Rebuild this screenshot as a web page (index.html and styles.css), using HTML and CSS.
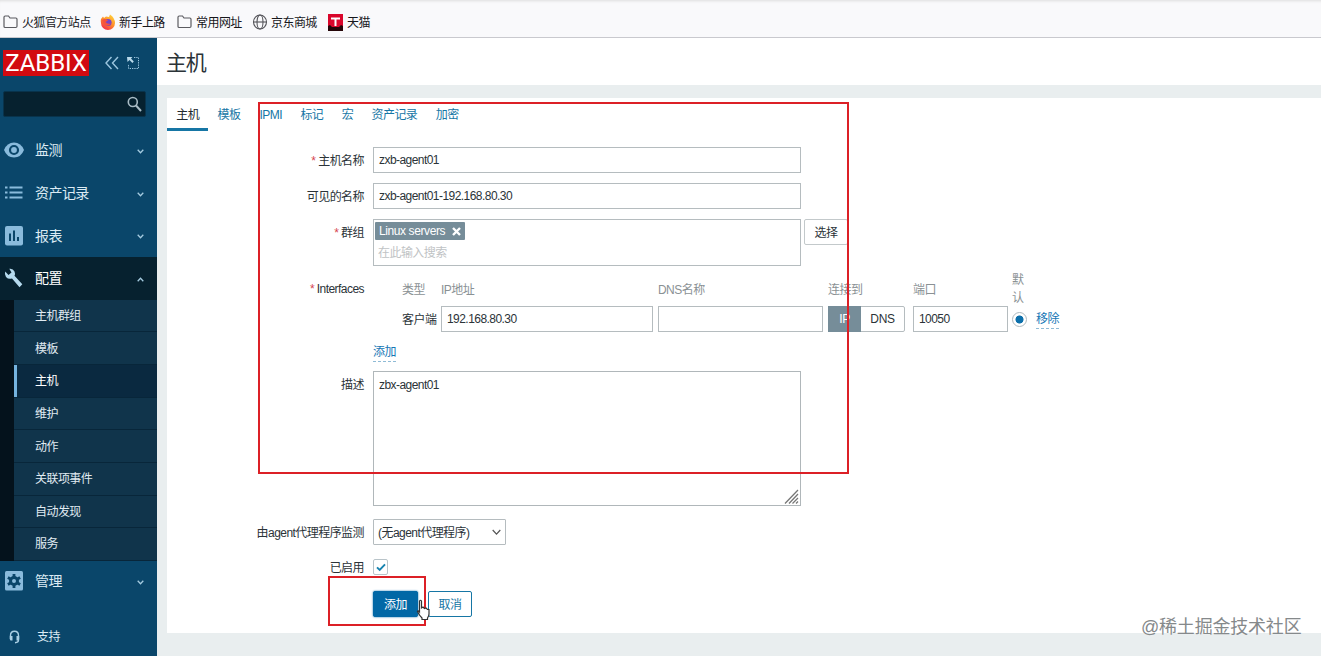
FILE: index.html
```html
<!DOCTYPE html>
<html lang="zh-CN">
<head>
<meta charset="utf-8">
<title>主机</title>
<link rel="stylesheet" href="styles.css">
</head>
<body>
<header class="bookmarks">
  <a class="bm bm-1"><svg width="16" height="16" viewBox="0 0 16 16"><path d="M1 12.500V3.200Q1 2 2.200 2H5.500L7 4H12.800Q14 4 14 5.200V12.300Q14 13.500 12.800 13.500H2.200Q1 13.500 1 12.500Z" fill="none" stroke="#5b5b60" stroke-width="1.200"/></svg><span>火狐官方站点</span></a>
  <a class="bm bm-2"><svg width="16" height="16" viewBox="0 0 16 16"><defs><linearGradient id="fox" x1=".8" y1="0" x2=".2" y2="1"><stop offset="0" stop-color="#ffd53a"/><stop offset=".5" stop-color="#ff8a2a"/><stop offset="1" stop-color="#f0254f"/></linearGradient></defs><path d="M1 5L3 2.500 4 4 6 2.500 9 3 10 .5Q15 4 15 9A7 7 0 0 1 1 9Q.5 7 1 5Z" fill="url(#fox)"/><circle cx="8" cy="8.500" r="3.600" fill="#7a45c4"/><path d="M2 6Q5 4 8 6.500L5.500 8Q7 10.500 11 9.500 8 13 4 11Z" fill="#f5543c"/></svg><span>新手上路</span></a>
  <a class="bm bm-3"><svg width="16" height="16" viewBox="0 0 16 16"><path d="M1 12.500V3.200Q1 2 2.200 2H5.500L7 4H12.800Q14 4 14 5.200V12.300Q14 13.500 12.800 13.500H2.200Q1 13.500 1 12.500Z" fill="none" stroke="#5b5b60" stroke-width="1.200"/></svg><span>常用网址</span></a>
  <a class="bm bm-4"><svg width="16" height="16" viewBox="0 0 16 16" fill="none" stroke="#55555a" stroke-width="1.100"><ellipse cx="8" cy="8" rx="6.500" ry="7"/><ellipse cx="8" cy="8" rx="3" ry="7"/><path d="M1.500 8H14.500"/></svg><span>京东商城</span></a>
  <a class="bm bm-5"><svg width="16" height="17" viewBox="0 0 16 17"><path d="M0 0H15V13L13 12 11 14H4L2 12 0 13Z" fill="#d9062b"/><path d="M0 12L2 11 4 13H11L13 11 15 12V17H0Z" fill="#250508"/><path d="M3 3.500H12V5.500H8.500V12H6.500V5.500H3Z" fill="#fff"/></svg><span>天猫</span></a>
</header>

<div class="app">
  <aside class="sidebar">
    <div class="brand">
      <span class="logo"><span class="logo-text">ZABBIX</span></span>
      <svg class="collapse" width="14" height="14" viewBox="0 0 14 14"><path d="M6.500 1L1 7 6.500 13M13 1L7.500 7 13 13" fill="none" stroke="#9cc6df" stroke-width="1.400"/></svg>
      <svg class="kiosk" width="13" height="14" viewBox="0 0 13 14"><path d="M7 1.500H11.500V12.500H1.500V8" fill="none" stroke="#9cc6df" stroke-dasharray="1.300 1"/><path d="M0 1H5.500L4 2.500 6.800 5.600 5.400 7 2.500 4 .5 6Z" fill="#b9d9ea"/></svg>
    </div>
    <div class="search"><svg width="15" height="16" viewBox="0 0 15 16"><circle cx="5.800" cy="6" r="4.500" fill="none" stroke="#a9bcc6" stroke-width="1.600"/><path d="M9 9.500L14 15" stroke="#a9bcc6" stroke-width="2"/></svg></div>
    <nav class="menu">
      <a class="item"><svg class="ico" width="20" height="18" viewBox="0 0 20 18"><path d="M0 9Q3 1.500 10 1.500T20 9Q17 16.500 10 16.500T0 9Z" fill="#8abbdc"/><circle cx="10" cy="9" r="4" fill="none" stroke="#0a466a" stroke-width="2.200"/></svg><span>监测</span><svg class="chev" width="7" height="5" viewBox="0 0 7 5"><path d="M.7 .8L3.500 3.700 6.300 .8"/></svg></a>
      <a class="item"><svg class="ico" width="20" height="18" viewBox="0 0 20 18"><path d="M1 3.500H3.500M1 8.500H3.500M1 13.500H3.500M5.500 3.500H18.500M5.500 8.500H18.500M5.500 13.500H18.500" stroke="#8abbdc" stroke-width="2"/></svg><span>资产记录</span><svg class="chev" width="7" height="5" viewBox="0 0 7 5"><path d="M.7 .8L3.500 3.700 6.300 .8"/></svg></a>
      <a class="item"><svg class="ico" width="20" height="20" viewBox="0 0 20 20"><rect x="1" y="0" width="18" height="19.500" rx="2" fill="#8abbdc"/><path d="M6 7.500V15M10 4.500V15M14 11V15" stroke="#0a466a" stroke-width="2"/></svg><span>报表</span><svg class="chev" width="7" height="5" viewBox="0 0 7 5"><path d="M.7 .8L3.500 3.700 6.300 .8"/></svg></a>
      <a class="item open"><svg class="ico" width="20" height="20" viewBox="0 0 20 20"><path d="M5.300 .8Q9 .3 10.500 3.500Q11.500 5.800 10.500 7.800L18.300 16.300 15.500 19.300 8 10.500Q4.500 11.700 2 9Q.2 6.500 1.200 3.500L4.500 7 7.500 4.500Z" fill="#b5daee"/></svg><span>配置</span><svg class="chev" width="7" height="5" viewBox="0 0 7 5"><path d="M.7 4.200L3.500 1.300 6.300 4.200"/></svg></a>
      <div class="submenu">
        <a>主机群组</a><a>模板</a><a class="current">主机</a><a>维护</a><a>动作</a><a>关联项事件</a><a>自动发现</a><a>服务</a>
      </div>
      <a class="item admin"><svg class="ico" width="20" height="20" viewBox="0 0 20 20"><rect x="1" y="0" width="18" height="19.500" rx="1.500" fill="#8abbdc"/><circle cx="10" cy="10" r="3.500" fill="none" stroke="#0a466a" stroke-width="3"/><path d="M10 3V6M10 14V17M3.900 6.500L6.500 8M13.500 12L16.100 13.500M3.900 13.500L6.500 12M13.500 8L16.100 6.500" stroke="#0a466a" stroke-width="2.800"/></svg><span>管理</span><svg class="chev" width="7" height="5" viewBox="0 0 7 5"><path d="M.7 .8L3.500 3.700 6.300 .8"/></svg></a>
      <a class="support"><svg width="11" height="14" viewBox="0 0 11 14"><path d="M1.500 9V5.500Q1.500 1.200 5.500 1.200T9.500 5.500V10Q9.500 12.500 6 12.700" fill="none" stroke="#a9cfe4" stroke-width="1.400"/><path d="M.8 6H3.500V10.500H2Q.8 10.500 .8 9ZM10.200 6H7.500V10.500H9Q10.200 10.500 10.200 9Z" fill="#a9cfe4"/></svg><span>支持</span></a>
    </nav>
  </aside>

  <main class="main">
    <h1 class="title">主机</h1>
    <section class="panel">
      <div class="tabs"><a class="active">主机</a><a>模板</a><a class="t-ipmi">IPMI</a><a>标记</a><a>宏</a><a>资产记录</a><a>加密</a></div>
      <form class="form">
        <div class="row r-name"><label><i>*</i> 主机名称</label><div class="box w428">zxb-agent01</div></div>
        <div class="row r-visible"><label>可见的名称</label><div class="box w428">zxb-agent01-192.168.80.30</div></div>
        <div class="row r-group"><label><i>*</i> 群组</label>
          <div class="multi w428"><span class="tag">Linux servers<svg width="9" height="9" viewBox="0 0 9 9"><path d="M1 1L8 8M8 1L1 8" stroke="#fff" stroke-width="2.400"/></svg></span><span class="hint">在此输入搜索</span></div>
          <div class="btn-select">选择</div></div>
        <div class="row r-iface"><label><i>*</i> Interfaces</label>
          <div class="ifaces">
            <span class="h">类型</span><span class="h">IP地址</span><span class="h">DNS名称</span><span class="h">连接到</span><span class="h">端口</span><span class="h def">默认</span><span></span>
            <span class="kind">客户端</span><div class="box">192.168.80.30</div><div class="box"></div><div class="seg"><b>IP</b><span>DNS</span></div><div class="box port">10050</div><span class="radio"></span><span class="rm"><a class="link">移除</a></span>
          </div></div>
        <div class="row r-add"><label></label><a class="link">添加</a></div>
        <div class="row r-desc"><label>描述</label><div class="area w428"><span>zbx-agent01</span><svg width="15" height="15" viewBox="0 0 15 15"><path d="M1 14.500L14 1M5 14.500L14 5M8.500 14.500L14 9M12 14.500L14 12.500" stroke="#777" stroke-width="1.300"/></svg></div></div>
        <div class="row r-proxy"><label>由agent代理程序监测</label><div class="drop"><span>(无agent代理程序)</span><svg width="9" height="7" viewBox="0 0 9 7"><path d="M.7 1L4.500 5.200 8.300 1" fill="none" stroke="#555" stroke-width="1.200"/></svg></div></div>
        <div class="row r-on"><label>已启用</label><span class="check"><svg width="10" height="9" viewBox="0 0 10 9"><path d="M1 4.300L3.700 7 9 1.300" fill="none" stroke="#1783b0" stroke-width="1.900"/></svg></span></div>
        <div class="row r-buttons"><label></label><div class="btn primary">添加</div><div class="btn">取消</div></div>
      </form>
    </section>
  </main>
</div>
<div class="mark mark-form"></div>
<div class="mark mark-submit"></div>
<svg class="pointer" width="16" height="22" viewBox="0 0 16 22"><path d="M3.500 2Q4.500 .5 5.500 2V9L7 8 8.500 9.500 10 9 11.500 10.500 13 10.500V15Q13 17 11.500 19V20.500H6V19Q3 16 1.500 12.500Q2 11 3.500 13Z" fill="#fff" stroke="#333" stroke-width="1.200"/></svg>
<div class="watermark">@稀土掘金技术社区</div>
</body>
</html>
```
FILE: styles.css
```css
* { box-sizing: border-box; }
body {
  margin: 0; width: 1321px; height: 656px; overflow: hidden; position: relative;
  font: 12px/18px "Liberation Sans", "Noto Sans CJK SC", sans-serif;
  letter-spacing: -.55px; color: #2b3338; background: #e9eeef;
}
svg { display: block; flex: none; }
.bookmarks { display: flex; height: 38px; padding: 7px 0 0 3px; background: #f9f9fb; border-bottom: 1px solid #c9c9ce; box-shadow: inset 0 3px 3px -2px #ddd; color: #17171b; }
.bm { display: flex; align-items: center; height: 30px; gap: 3px; white-space: nowrap; }
.bm span { padding-top: 2px; }
.bm-1 { width: 97px; }
.bm-2 { width: 77px; }
.bm-3 { width: 75px; }
.bm-4 { width: 76px; }
.app { display: flex; height: 618px; }

/* Sidebar */
.sidebar { width: 157px; flex: none; background: #0a466a; color: #dcebf4; }
.brand { display: flex; align-items: center; height: 26px; margin: 12px 0 0 3px; }
.logo { width: 86px; height: 26px; background: #d20a10; display: flex; align-items: center; justify-content: center; overflow: hidden; }
.logo-text { font: 24px/27px Roboto, sans-serif; letter-spacing: -.1px; color: #fff; }
.collapse { margin-left: 16px; }
.kiosk { margin-left: 8px; }
.search { display: flex; align-items: center; justify-content: flex-end; width: 143px; height: 26px; margin: 15px 0 12px 3px; padding-right: 3px; border-radius: 2px; background: #06212f; border: 1px solid #08334c; }
.item { display: flex; align-items: center; height: 42.7px; padding: 0 13px 0 4px; font-size: 14px; }
.item span { margin-left: 11px; flex: 1; }
.item.admin { height: 41px; }
.chev { fill: none; stroke: #a5cbe0; stroke-width: 1.3; margin-top: 2px; }
.open { background: #06212f; color: #fff; }
.submenu { background: linear-gradient(90deg, #04121c 14px, #10344b 14px); padding-left: 14px; height: 261px; display: flex; flex-direction: column; }
.submenu a { flex: 1; display: flex; align-items: center; padding: 1px 0 0 21px; border-bottom: 1px solid #08263a; color: #e0ebf2; }
.submenu a.current { background: #0a2940; box-shadow: inset 3px 0 #75b3df; color: #fff; }
.support { display: flex; align-items: center; height: 34px; margin-top: 18px; padding-left: 9px; gap: 17px; }
.support span { padding-top: 1px; }

/* Content */
.main { flex: 1; }
.title { height: 47px; margin: 0; padding: 0 0 0 9px; background: #fff; font-size: 21px; line-height: 49px; font-weight: 400; letter-spacing: -1.3px; }
.panel { margin: 13px 0 0 10px; height: 535px; background: #fff; }
.tabs { display: flex; height: 33px; }
.tabs a { padding: 7px 9.2px 0; height: 33px; color: #1676a5; line-height: 21px; }
.tabs .active { color: #22292e; border-bottom: 3px solid #1676a5; }
.tabs .t-ipmi { padding-left: 10px; }
.row { display: flex; align-items: flex-start; }
.row label { width: 197px; margin-right: 9px; text-align: right; white-space: nowrap; line-height: 28px; height: 26px; }
.row i { color: #d64550; font-style: normal; }
.w428 { width: 428px; }
.box { height: 26px; padding-left: 5px; line-height: 25px; border: 1px solid #b5bcbf; background: #fff; white-space: nowrap; }
.r-name { margin-top: 16px; }
.r-visible { margin-top: 10px; }
.r-group { margin-top: 10px; }
.multi { height: 47px; border: 1px solid #b5bcbf; padding: 2px 1px; display: flex; flex-direction: column; align-items: flex-start; }
.tag { display: flex; align-items: center; gap: 7px; height: 19px; padding: 0 4px; background: #768d99; color: #fff; border-radius: 1px; letter-spacing: -.4px; }
.hint { padding-left: 3px; line-height: 26px; color: #bfc3c5; }
.btn-select { width: 44px; height: 26px; margin-left: 3px; text-align: center; line-height: 26px; border: 1px solid #c3c9cb; border-radius: 2px; }
.r-iface { margin-top: 5px; }
.row.r-iface > label { line-height: 37px; }
.ifaces { display: grid; grid-template-columns: 63px 212px 165px 77px 95px 15px 30px; grid-template-rows: 35px 26px; column-gap: 5px; align-items: center; line-height: 25px; }
.ifaces > span:nth-child(7n+1) { padding-left: 29px; white-space: nowrap; }
.ifaces .h { color: #8a9194; padding-top: 3px; }
.ifaces .kind { padding-top: 2px; }
.ifaces .h:nth-child(5), .port { margin-left: 3px; margin-right: -3px; }
.ifaces .def { line-height: 18px; width: 12px; margin-left: 2px; padding-top: 0; word-break: break-all; }
.seg { display: flex; text-align: center; height: 26px; line-height: 25px; border: 1px solid #b5bcbf; border-radius: 2px; letter-spacing: -.3px; }
.seg b { width: 33px; font-weight: 400; color: #fff; background: #768d99; margin: -1px 0 -1px -1px; padding-top: 1px; }
.seg span { flex: 1; }
.radio { width: 15px; height: 15px; margin-left: 2px; border: 1px solid #aeb9be; border-radius: 50%; background: radial-gradient(circle, #0d70ab 3.6px, #fff 4.4px); }
.rm { padding: 1px 0 0 6px; }
.link { color: #1676b5; line-height: 17px; border-bottom: 1px dashed #8fbbd6; display: inline-block; white-space: nowrap; }
.r-add { margin-top: 12px; height: 27px; }
.r-desc { height: 135px; }
.area { height: 135px; padding: 4px 1px 1px 5px; border: 1px solid #b0b7ba; display: flex; justify-content: space-between; }
.area svg { align-self: flex-end; }
.r-proxy { margin-top: 13px; }
.drop { display: flex; align-items: center; justify-content: space-between; width: 133px; height: 26px; padding: 0 4px; border: 1px solid #b5bcbf; border-radius: 1px; white-space: nowrap; }
.drop span { padding-top: 1px; }
.r-on { margin-top: 9px; height: 26px; }
.check { width: 15px; height: 16px; margin-top: 5px; border: 1px solid #b9c4c9; border-radius: 2px; display: flex; align-items: center; justify-content: center; }
.r-buttons { margin-top: 11px; }
.btn { width: 44px; height: 26px; line-height: 26px; text-align: center; color: #1676a5; border: 1px solid #1676a5; border-radius: 2px; }
.primary { width: 45px; margin-right: 10px; color: #fff; background: #0268a6; border-color: #0268a6; box-shadow: 0 0 2px #0268a6; }

/* Overlays */
.mark { position: absolute; border: 2px solid #dc2026; }
.mark-form { left: 258px; top: 102px; width: 591px; height: 372px; }
.mark-submit { left: 328px; top: 576px; width: 98px; height: 50px; }
.pointer { position: absolute; left: 416px; top: 599px; }
.watermark { position: absolute; left: 1141px; top: 614px; font-size: 18px; line-height: 26px; letter-spacing: -.2px; color: #85898b; white-space: nowrap; text-shadow: 0 0 1px #fff; }
```
